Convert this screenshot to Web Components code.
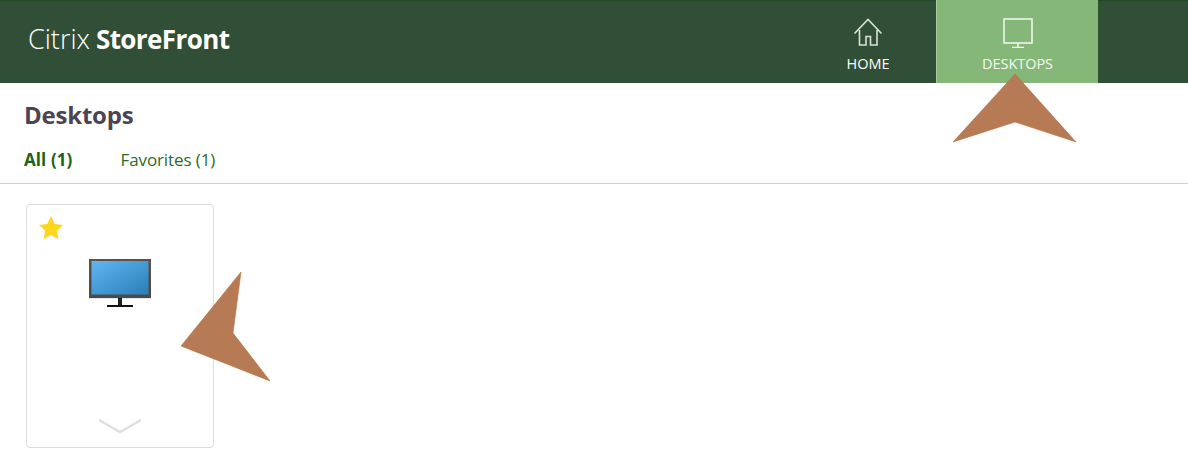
<!DOCTYPE html>
<html><head><meta charset="utf-8"><style>
html,body{margin:0;padding:0;background:#fff}
body{width:1188px;height:470px;overflow:hidden;position:relative;font-family:"Open Sans","Liberation Sans",sans-serif}
</style></head><body>
<sf-app></sf-app>
<script>
function def(name,html,init){customElements.define(name,class extends HTMLElement{constructor(){super();this.attachShadow({mode:'open'}).innerHTML=html;}connectedCallback(){init&&init(this)}})}
def('sf-tab',`<style>
:host{display:flex;flex-direction:column;align-items:center;height:83px;box-sizing:border-box;margin-top:-1px;padding-top:18px;color:#fff;font-size:14.5px;line-height:18px;letter-spacing:-.03px}
:host([active]){background:#85b878;border-left:1px solid #a5cc9a;color:#f4f8f2}
.i{height:30px;display:flex;margin-bottom:7px}
</style><div class="i"><slot name="icon"></slot></div><slot></slot>`);
def('sf-header',`<style>
:host{display:flex;align-items:flex-start;height:83px;box-sizing:border-box;background:#314f36;border-top:1px solid #1f4a26;color:#fff}
.logo{padding:20px 0 0 28px;font-size:27px;line-height:36px;font-weight:300}
.logo b{font-size:26px;font-weight:700;letter-spacing:-.6px;margin-left:-1px}
nav{margin-left:auto;margin-right:90px;display:flex}
::slotted(sf-tab){width:136px}
::slotted(sf-tab[active]){width:162px}
</style><div class="logo">Citrix <b>StoreFront</b></div><nav><slot></slot></nav>`);
def('sf-tabs',`<style>
:host{display:flex;gap:48px;padding:0 0 0 24px;height:35px;box-sizing:border-box;border-bottom:1px solid #cfcfcf;font-size:17px;line-height:22px;color:#2e6b24;letter-spacing:-.1px}
b{font-weight:700;color:#1d6313;letter-spacing:.1px}
</style><b>All (1)</b><span>Favorites (1)</span>`);
def('sf-card',`<style>
:host{display:block;position:relative;box-sizing:border-box;width:188px;height:244px;border:1px solid #dcdcdc;border-radius:4px;background:#fff}
.top{padding:10px 0 0 11px;height:29px;display:flex}
.mon{display:flex;justify-content:center;margin-top:15px}
.chev{position:absolute;left:0;right:0;bottom:12px;display:flex;justify-content:center}
</style><div class="top"><svg width="26" height="26" viewBox="0 0 26 26"><path d="M13 1l3.700 7.900 8.300 1-6.100 5.900 1.600 8.500L13 20.100l-7.500 4.200 1.600-8.500L1 9.900l8.300-1z" fill="#fdd71d"/></svg></div>
<div class="mon"><svg width="64" height="50" viewBox="0 0 64 50"><defs><linearGradient id="g" x1="0" y1="0" x2="1" y2="1"><stop offset="0" stop-color="#5fb6f2"/><stop offset="1" stop-color="#2a7fb6"/></linearGradient><linearGradient id="b" x1="0" y1="0" x2="0" y2="1"><stop offset="0" stop-color="#5b5348"/><stop offset="1" stop-color="#4a4a4a"/></linearGradient></defs>
<rect x="1" y="39" width="62" height="1" fill="#e4e4e4"/><rect x="1" y="0" width="62" height="39" fill="url(#b)"/><rect x="3.500" y="2" width="57" height="33.500" fill="url(#g)"/><rect x="30" y="39" width="4" height="7" fill="#222"/><rect x="19" y="46" width="26" height="2" fill="#111"/></svg></div>
<div class="chev"><svg width="44" height="16" viewBox="0 0 44 16"><path d="M1 1l21 12L43 1" fill="none" stroke="#dfdfdf" stroke-width="2.400"/></svg></div>`);
def('sf-arrow',`<style>:host{position:absolute;left:0;top:0;width:1188px;height:470px;pointer-events:none;display:block}svg{display:block}</style>
<svg width="1188" height="470" viewBox="0 0 1188 470"><g fill="#b67a55" stroke="#b8703f" stroke-width=".6"><polygon points="1015,74 1076,142 1015,122 953,142"/><polygon points="241,272 233,333 270,381 181,346"/></g></svg>`);
def('sf-app',`<style>
:host{display:block;height:470px;position:relative;color:#4b4453}
h1{margin:0;padding:15px 0 0 24px;height:66px;box-sizing:border-box;font-size:24px;line-height:34px;font-weight:700;color:#4b4453;letter-spacing:-.22px}
.grid{padding:20px 0 0 26px}
svg{display:block}
</style>
<sf-header>
<sf-tab><svg slot="icon" width="30" height="30" viewBox="0 0 30 30" fill="none" stroke="#d9e2d8" stroke-width="1.600"><path d="M1.500 15.500 15 1.500l13.500 14M6.500 12v15h6.500v-8.500h4.500V27h6.500V12"/></svg>HOME</sf-tab>
<sf-tab active><svg slot="icon" width="30" height="30" viewBox="0 0 30 30" fill="none" stroke="#eef5ec" stroke-width="1.600"><rect x="1" y="1" width="28" height="24"/><path d="M15 25v4M9 29.500h12"/></svg>DESKTOPS</sf-tab>
</sf-header>
<h1>Desktops</h1>
<sf-tabs></sf-tabs>
<div class="grid"><sf-card></sf-card></div>
<sf-arrow></sf-arrow>`);
</script>
</body></html>
